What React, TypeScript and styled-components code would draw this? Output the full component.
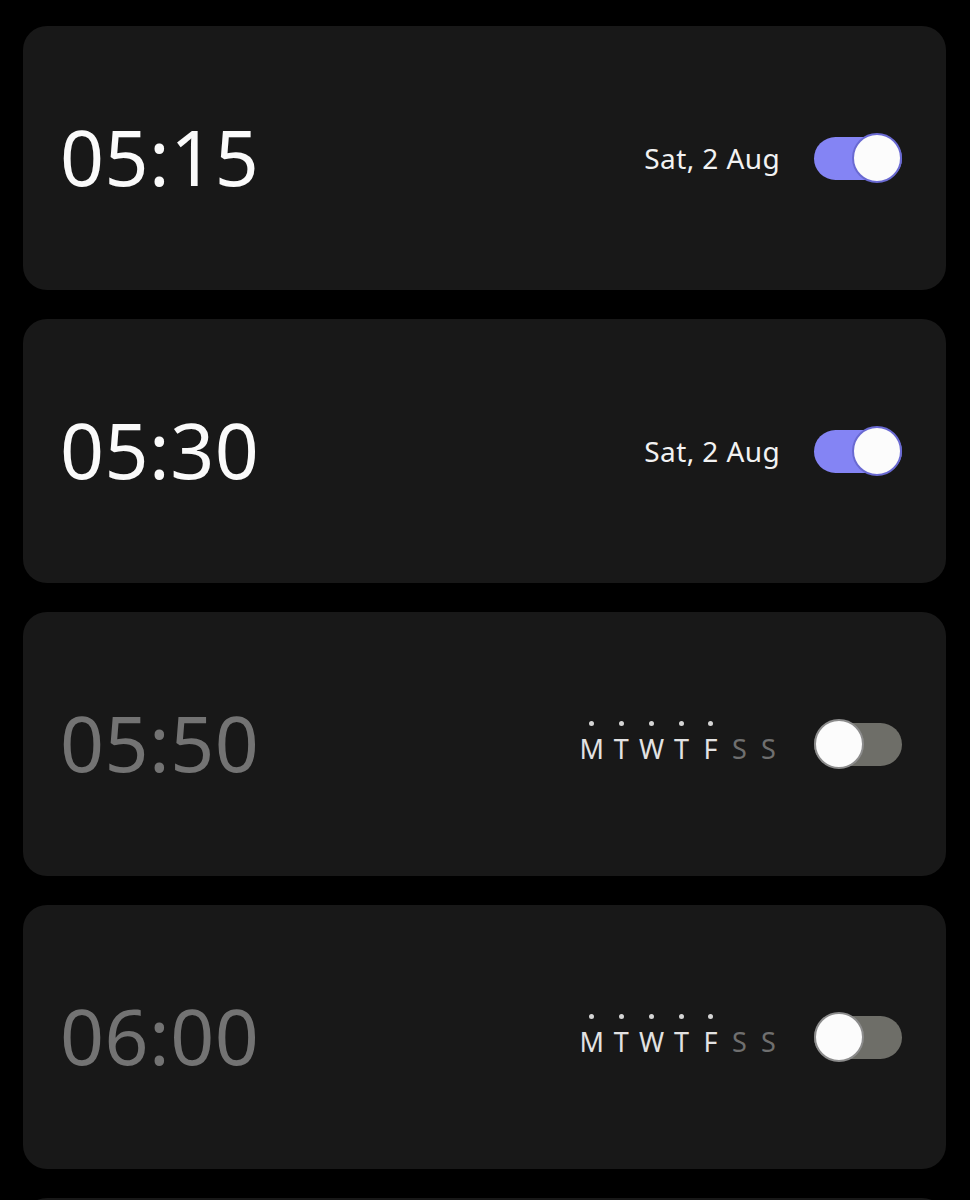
import React, { useState } from "react";
import styled, { createGlobalStyle } from "styled-components";

const GlobalStyle = createGlobalStyle`
  html, body {
    margin: 0;
    padding: 0;
    background: #000;
  }
  body {
    font-family: "Noto Sans", "Open Sans", sans-serif;
  }
`;

const List = styled.div`
  display: flex;
  flex-direction: column;
  gap: 29px;
  padding: 26px 24px 0 23px;
  height: 1200px;
  overflow: hidden;
  box-sizing: border-box;
`;

const Card = styled.div`
  flex: 0 0 264px;
  display: flex;
  align-items: center;
  justify-content: space-between;
  padding: 0 44px 0 37px;
  background: #181818;
  border-radius: 24px;
`;

const Time = styled.div<{ $on: boolean }>`
  font-size: 77px;
  font-weight: 400;
  letter-spacing: 0.5px;
  color: ${(p) => (p.$on ? "#fafafa" : "#737373")};
  line-height: 1;
  padding-bottom: 4px;
`;

const Right = styled.div`
  display: flex;
  align-items: center;
  gap: 34px;
`;

const DateText = styled.div`
  font-size: 28px;
  color: #f2f2f2;
  letter-spacing: 0.4px;
`;

const Days = styled.div`
  display: flex;
  gap: 6px;
  padding-bottom: 6px;
`;

const Day = styled.div<{ $active: boolean }>`
  display: flex;
  flex-direction: column;
  align-items: center;
  gap: 9px;
  min-width: 23px;
  font-size: 27px;
  font-weight: 400;
  line-height: 1;
  color: ${(p) => (p.$active ? "#e2e2e2" : "#6f6f6f")};
`;

const Dot = styled.span<{ $show: boolean }>`
  width: 5px;
  height: 5px;
  border-radius: 50%;
  background: ${(p) => (p.$show ? "#d4d4d4" : "transparent")};
`;

const Track = styled.button<{ $on: boolean }>`
  position: relative;
  width: 88px;
  height: 43px;
  padding: 0;
  border: none;
  border-radius: 22px;
  background: ${(p) => (p.$on ? "#8484f4" : "#6e6e68")};
  cursor: pointer;
`;

const Thumb = styled.span<{ $on: boolean }>`
  position: absolute;
  top: 50%;
  left: ${(p) => (p.$on ? "38px" : "0")};
  width: 46px;
  height: 46px;
  margin-top: -25px;
  border-radius: 50%;
  background: #fcfcfc;
  border: 2px solid ${(p) => (p.$on ? "#6a6ad2" : "#8c8c8c")};
`;

type Alarm = {
  time: string;
  on: boolean;
  date?: string;
  days?: boolean[];
};

const LETTERS = ["M", "T", "W", "T", "F", "S", "S"];
const WEEKDAYS = [true, true, true, true, true, false, false];

const initial: Alarm[] = [
  { time: "05:15", on: true, date: "Sat, 2 Aug" },
  { time: "05:30", on: true, date: "Sat, 2 Aug" },
  { time: "05:50", on: false, days: WEEKDAYS },
  { time: "06:00", on: false, days: WEEKDAYS },
];

const App: React.FC = () => {
  const [alarms, setAlarms] = useState<Alarm[]>(initial);

  const toggle = (i: number) =>
    setAlarms((a) => a.map((x, j) => (j === i ? { ...x, on: !x.on } : x)));

  return (
    <>
      <GlobalStyle />
      <List>
        {alarms.map((a, i) => (
          <Card key={i}>
            <Time $on={a.on}>{a.time}</Time>
            <Right>
              {a.date && <DateText>{a.date}</DateText>}
              {a.days && (
                <Days>
                  {LETTERS.map((l, k) => (
                    <Day key={k} $active={a.days![k]}>
                      <Dot $show={a.days![k]} />
                      {l}
                    </Day>
                  ))}
                </Days>
              )}
              <Track $on={a.on} onClick={() => toggle(i)}>
                <Thumb $on={a.on} />
              </Track>
            </Right>
          </Card>
        ))}
        {/* next card, scrolled mostly off screen */}
        <Card />
      </List>
    </>
  );
};

export default App;
